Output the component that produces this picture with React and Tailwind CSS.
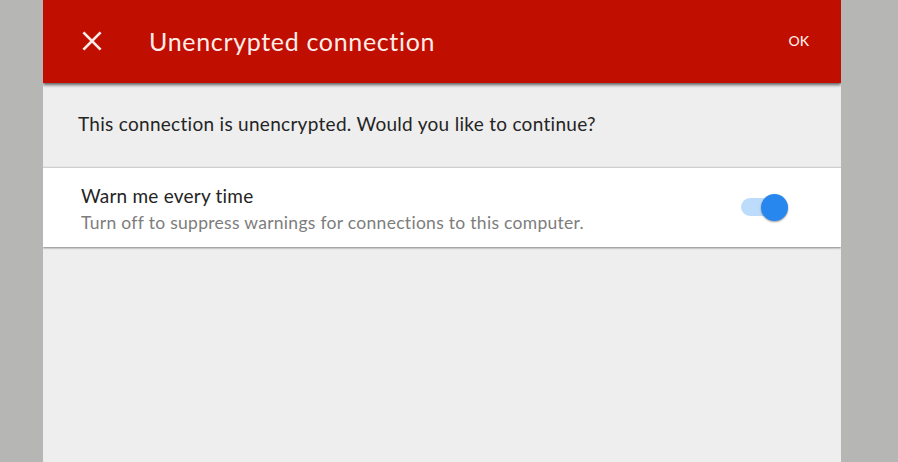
function CloseIcon() {
  return (
    <svg viewBox="0 0 20 20" className="size-5" fill="none" stroke="currentColor" strokeWidth="2.7">
      <path d="M1.4 1.4 18.6 18.6M18.6 1.4 1.4 18.6" />
    </svg>
  );
}

function Toggle() {
  return (
    <button role="switch" aria-checked="true" aria-label="Warn me every time" className="mb-px flex h-[18px] w-[47px] items-center justify-end rounded-full bg-[#bddcfb]">
      <span className="size-[27px] shrink-0 rounded-full bg-[#2787ee] shadow-[0_1px_2px_rgba(0,0,0,0.4)]" />
    </button>
  );
}

export default function App() {
  return (
    <div className="flex h-screen overflow-hidden bg-[#b6b6b4] pr-[57px] pl-[43px] font-['Lato',sans-serif]">
      <main className="flex flex-1 flex-col overflow-hidden bg-[#eeeeee] whitespace-nowrap text-[#242424] [font-variant-ligatures:none]">
        <header className="z-10 flex h-[83px] shrink-0 items-center bg-[#c00e00] pr-8 pb-0.5 pl-[39px] text-[#ffece8] shadow-[0_2px_3px_rgba(0,0,0,0.6)]">
          <button aria-label="Close"><CloseIcon /></button>
          <h1 className="ml-[47px] text-[25px] leading-8 tracking-[0.67px]">Unencrypted connection</h1>
          <button className="ml-auto text-[14px] font-medium">OK</button>
        </header>
        <p className="flex h-[84px] shrink-0 items-center pb-0.5 pl-[35px] text-[19px] tracking-[0.29px]">
          This connection is unencrypted. Would you like to continue?
        </p>
        <section className="flex h-20 shrink-0 items-center justify-between border-t border-[#cfcfcf] bg-white pr-[53px] pl-[38px] shadow-[0_1px_2px_rgba(0,0,0,0.45)]">
          <div className="pt-0.5">
            <h2 className="text-[19px] leading-[27px] tracking-[0.22px]">Warn me every time</h2>
            <p className="text-[17.5px] leading-[27px] tracking-[0.29px] text-[#7d7d7d]">Turn off to suppress warnings for connections to this computer.</p>
          </div>
          <Toggle />
        </section>
      </main>
    </div>
  );
}
